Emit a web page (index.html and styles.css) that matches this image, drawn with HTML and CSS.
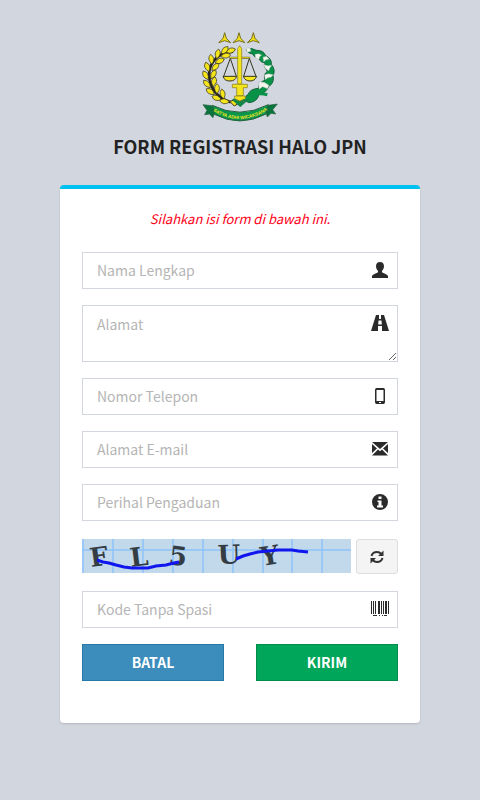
FILE: index.html
```
<!DOCTYPE html>
<html lang="id">
<head>
    <meta charset="UTF-8">
    <meta name="viewport" content="width=device-width, initial-scale=1.0">
    <title>Form Registrasi Halo JPN</title>
    <link rel="stylesheet" href="styles.css">
</head>
<body>
    <div class="register-box">
        <div class="register-logo">
            <svg class="logo" viewBox="0 0 300 315" role="img" aria-label="Logo Kejaksaan">
                <defs>
                    <path id="star" d="M0-19 L5-2 L18 11 L0 5 L-18 11 L-5-2Z"/>
                    <path id="leaf" d="M0-15 Q15-3 0 15 Q-15-3 0-15Z"/>
                    <path id="motto" d="M66 256 Q150 310 236 253"/>
                </defs>
                <!-- stars -->
                <g fill="#f2df18" stroke="#77701f" stroke-width="3">
                    <use href="#star" x="104" y="42"/>
                    <use href="#star" x="147" y="42"/>
                    <use href="#star" x="190" y="42"/>
                </g>
                <!-- rice wreath -->
                <path d="M129 80 C75 82 50 125 59 166 Q72 216 122 232" fill="none" stroke="#27251a" stroke-width="8"/>
                <g fill="#f5e51b" stroke="#37321a" stroke-width="2">
                    <use href="#leaf" transform="translate(122 77) rotate(72)"/>
                    <use href="#leaf" transform="translate(104 76) rotate(42)"/>
                    <use href="#leaf" transform="translate(107 92) rotate(82)"/>
                    <use href="#leaf" transform="translate(83 87) rotate(12)"/>
                    <use href="#leaf" transform="translate(89 108) rotate(66)"/>
                    <use href="#leaf" transform="translate(64 103) rotate(-8)"/>
                    <use href="#leaf" transform="translate(76 126) rotate(45)"/>
                    <use href="#leaf" transform="translate(52 126) rotate(-20)"/>
                    <use href="#leaf" transform="translate(70 148) rotate(28)"/>
                    <use href="#leaf" transform="translate(47 151) rotate(-30)"/>
                    <use href="#leaf" transform="translate(72 170) rotate(12)"/>
                    <use href="#leaf" transform="translate(51 177) rotate(-43)"/>
                    <use href="#leaf" transform="translate(81 191) rotate(0)"/>
                    <use href="#leaf" transform="translate(61 200) rotate(-55)"/>
                    <use href="#leaf" transform="translate(98 207) rotate(-12)"/>
                    <use href="#leaf" transform="translate(80 219) rotate(-70)"/>
                    <use href="#leaf" transform="translate(104 229) rotate(-82)"/>
                </g>
                <path d="M119 229 L156 219 L166 222 L133 243Z" fill="#f5e51b" stroke="#37321a" stroke-width="3"/>
                <!-- cotton wreath -->
                <path d="M169 74 Q186 66 198 76 Q220 75 226 91 Q246 101 244 118 Q258 136 249 151 Q254 175 236 184 Q228 205 207 208 Q202 231 177 233 L161 225 L151 244 L129 225 L136 221 L151 230 L175 207 Q180 192 206 190 Q208 170 225 166 Q219 148 232 139 Q220 124 225 113 Q210 113 207 99 Q192 99 188 87 Q174 86 169 74Z" fill="#079247" stroke="#17633c" stroke-width="3"/>
                <g fill="#f4f5ee" stroke="#91a99c" stroke-width="1">
                    <path d="M168 70 L180 69 L183 79 L172 82Z"/>
                    <path d="M195 88 L206 86 L215 90 L209 95 L207 104 L196 98Z"/>
                    <path d="M219 96 L230 94 L238 103 L228 104 L221 111Z"/>
                    <path d="M220 118 L232 122 L246 121 L240 128 L236 138 L226 130Z"/>
                    <path d="M223 149 L236 146 L250 149 L243 157 L234 158 L226 164Z"/>
                    <path d="M207 171 L223 172 L237 181 L232 191 L218 185 L207 193Z"/>
                </g>
                <path d="M188 211 Q207 203 232 209" fill="none" stroke="#079247" stroke-width="9"/>
                <!-- scales -->
                <g fill="none" stroke="#34331f" stroke-width="3">
                    <path d="M120 99 H178 M121 100 L101 154 M121 100 L139 154 M178 100 L161 154 M178 100 L198 154"/>
                </g>
                <g fill="#f5e51b" stroke="#34331f" stroke-width="3">
                    <path d="M99 154 H140 Q136 168 120 168 Q103 168 99 154Z"/>
                    <path d="M160 154 H200 Q195 168 180 168 Q165 168 160 154Z"/>
                    <path d="M118 96 H180 V100 H118Z" stroke-width="1"/>
                </g>
                <!-- sword -->
                <g fill="#f5e51b" stroke="#817719" stroke-width="2">
                    <path d="M149 62 L155 71 V177 H143 V71Z"/>
                    <path d="M127 178 H172 V188 H160 V212 H140 V188 H127Z"/>
                    <path d="M134 213 H166 V221 L149 228 L134 221Z"/>
                </g>
                <path d="M128 223 L151 242 L174 222" fill="none" stroke="#14864b" stroke-width="6"/>
                <!-- ribbon -->
                <path d="M39 239 L65 242 L75 259 L69 278 L58 267 L44 269 L51 256Z M262 237 L235 241 L226 257 L232 276 L243 265 L257 267 L248 254Z" fill="#08763c" stroke="#245b3c" stroke-width="2"/>
                <path d="M67 241 Q149 283 235 239 L228 267 Q150 308 73 268Z" fill="#07964b" stroke="#27603f" stroke-width="3"/>
                <text class="motto"><textPath href="#motto" startOffset="50%">SATYA ADHI WICAKSANA</textPath></text>
            </svg>
            <h1>FORM REGISTRASI HALO JPN</h1>
        </div>

        <div class="register-box-body">
            <p class="register-msg">Silahkan isi form di bawah ini.</p>
            <form>
                <div class="form-group">
                    <input type="text" class="form-control" placeholder="Nama Lengkap" aria-label="Nama Lengkap">
                    <svg class="form-icon" viewBox="0 0 16 16"><path d="M8 0C5.500 0 4 1.600 4 4.200C4 6 4.800 7.700 6 8.700V10.300C5 11.300 1 12 0 14V16H16V14C15 12 11 11.300 10 10.300V8.700C11.200 7.700 12 6 12 4.200C12 1.600 10.500 0 8 0Z"/></svg>
                </div>
                <div class="form-group">
                    <textarea class="form-control" placeholder="Alamat" aria-label="Alamat"></textarea>
                    <svg class="form-icon icon-road" viewBox="0 0 18 16"><path d="M5 0H8V4H10V0H13L18 16H11V11H7V16H0ZM7.500 5.500L7.200 9.500H10.800L10.500 5.500Z" fill-rule="evenodd"/></svg>
                </div>
                <div class="form-group">
                    <input type="tel" class="form-control" placeholder="Nomor Telepon" aria-label="Nomor Telepon">
                    <svg class="form-icon" viewBox="0 0 16 16"><path d="M4.500 0H11.500Q13 0 13 2V14Q13 16 11.500 16H4.500Q3 16 3 14V2Q3 0 4.500 0ZM4.500 2V13H11.500V2ZM7 14V15H9V14Z" fill-rule="evenodd"/></svg>
                </div>
                <div class="form-group">
                    <input type="email" class="form-control" placeholder="Alamat E-mail" aria-label="Alamat E-mail">
                    <svg class="form-icon" viewBox="0 0 16 16"><path d="M0 1H16L8 8ZM0 3L5 7.500L0 12ZM16 3V12L11 7.500ZM6 8.500L8 10.300L10 8.500L16 14.500H0Z"/></svg>
                </div>
                <div class="form-group">
                    <input type="text" class="form-control" placeholder="Perihal Pengaduan" aria-label="Perihal Pengaduan">
                    <svg class="form-icon" viewBox="0 0 16 16"><path d="M8 0A8 8 0 1 0 8 16A8 8 0 1 0 8 0ZM6.500 2.500H9.500V5H6.500ZM5.500 6.500H9.500V11.500H11V13.500H5V11.500H6.500V8H5.500Z" fill-rule="evenodd"/></svg>
                </div>
                <div class="captcha-row">
                    <svg class="captcha" viewBox="0 0 269 34" role="img" aria-label="Captcha">
                        <path d="M0 0H269V34H0Z" fill="#c2d8eb"/>
                        <path d="M1 0V34M31 0V34M61 0V34M91 0V34M121 0V34M151 0V34M181 0V34M210 0V34M240 0V34M0 11H269" fill="none" stroke="#8fc2fa" stroke-width="1.500"/>
                        <g class="captcha-text">
                            <text transform="translate(9 28) rotate(-8)">F</text>
                            <text transform="translate(49 28) rotate(-7)">L</text>
                            <text transform="translate(86 25) rotate(7)">5</text>
                            <text transform="translate(136 25) rotate(-2)">U</text>
                            <text transform="translate(180 27) rotate(-9)">Y</text>
                        </g>
                        <path d="M15 21L21 23L27 24L34 26L42 28L50 29H66L74 27L84 26L92 24L97 23M154 20L161 17L168 15L176 13L186 12L196 11H210L216 12L226 13" fill="none" stroke="#1016ee" stroke-width="3"/>
                    </svg>
                    <button type="button" class="btn-refresh" aria-label="Muat ulang captcha">
                        <svg viewBox="0 0 14 14"><path d="M1.500 6Q2.500 2 7 2Q9.500 2 11.500 4M12.500 8Q11.500 12 7 12Q4.500 12 2.500 10" fill="none" stroke="#333" stroke-width="2"/><path d="M13.500 0.500V6H8ZM0.500 13.500V8H6Z" fill="#333"/></svg>
                    </button>
                </div>
                <div class="form-group">
                    <input type="text" class="form-control" placeholder="Kode Tanpa Spasi" aria-label="Kode Tanpa Spasi">
                    <svg class="form-icon icon-barcode" viewBox="0 0 18 16"><path d="M0 0H1V13H0ZM2 0H3V13H2ZM4 0H5V13H4ZM7 0H9V13H7ZM10 0H11V13H10ZM12 0H13V13H12ZM14 0H16V13H14ZM17 0H18V13H17ZM2 14H6V15H2ZM8 14H9V15H8ZM11 14H12V15H11ZM13 14H16V15H13Z"/></svg>
                </div>
                <div class="form-actions">
                    <button type="reset" class="btn btn-primary">BATAL</button>
                    <button type="submit" class="btn btn-success">KIRIM</button>
                </div>
            </form>
        </div>
    </div>
</body>
</html>
```
FILE: styles.css
```
* {
    box-sizing: border-box;
}
body {
    margin: 0;
    background-color: #d2d6de;
    color: #222;
    font-family: "Noto Sans CJK SC", "Open Sans", sans-serif;
    font-size: 14px;
    line-height: 20px;
}
.register-box {
    width: 75%;
    min-width: 300px;
    max-width: 480px;
    margin: 0 auto;
    padding: 25px 0;
}
.register-logo {
    text-align: center;
    margin-bottom: 26px;
}
.logo {
    display: block;
    width: 100px;
    height: 105px;
    margin: 0 auto;
}
.motto {
    fill: #f5e51b;
    font-family: "Liberation Sans", sans-serif;
    font-size: 14px;
    font-weight: bold;
    text-anchor: middle;
}
h1 {
    margin: 0;
    padding-top: 3px;
    font-size: 18px;
    font-weight: bold;
    line-height: 26px;
}
.register-box-body {
    background-color: #fff;
    border-top: 4px solid #00c0ef;
    border-radius: 4px;
    box-shadow: 0 1px 2px rgba(0, 0, 0, 0.15);
    padding: 20px 22px 42px;
}
.register-msg {
    margin: 0 0 23px;
    color: #ff0018;
    font-size: 13px;
    font-style: italic;
    text-align: center;
}
.form-group {
    position: relative;
    margin-bottom: 16px;
}
.form-control {
    display: block;
    width: 100%;
    height: 37px;
    padding: 6px 40px 8px 14px;
    border: 1px solid #d2d6de;
    border-radius: 0;
    background-color: #fff;
    color: #555;
    font: inherit;
}
.form-control::placeholder {
    color: #b5b5b5;
    opacity: 1;
}
textarea.form-control {
    height: 57px;
    padding-top: 8px;
    resize: vertical;
}
.form-control:focus {
    border-color: #3c8dbc;
    outline: none;
}
/* icon sits over the right end of the field */
.form-icon {
    position: absolute;
    top: 10px;
    right: 10px;
    width: 16px;
    height: 16px;
    fill: #2b2b2b;
    pointer-events: none;
}
.icon-road,
.icon-barcode {
    right: 9px;
    width: 18px;
}
.captcha-row {
    display: flex;
    gap: 5px;
    padding-top: 2px;
    margin-bottom: 17px;
}
.captcha {
    flex: 1;
    min-width: 0;
    height: 34px;
    overflow: visible;
}
.captcha-text {
    fill: #343d43;
    font-family: "DejaVu Serif", serif;
    font-size: 26px;
    font-weight: bold;
}
.btn-refresh {
    display: flex;
    align-items: center;
    justify-content: center;
    width: 42px;
    height: 35px;
    padding: 0;
    border: 1px solid #ddd;
    border-radius: 3px;
    background-color: #f4f4f4;
    cursor: pointer;
}
.btn-refresh svg {
    width: 14px;
    height: 14px;
}
.form-actions {
    display: grid;
    grid-template-columns: 1fr 1fr;
    gap: 32px;
}
.btn {
    height: 37px;
    padding: 0 0 2px;
    border: 1px solid;
    color: #fff;
    font: inherit;
    font-weight: bold;
    cursor: pointer;
}
.btn-primary {
    background-color: #3c8dbc;
    border-color: #2579a9;
}
.btn-success {
    background-color: #00a65a;
    border-color: #008d4c;
}
```
